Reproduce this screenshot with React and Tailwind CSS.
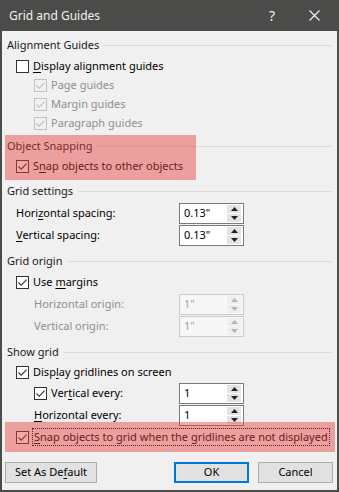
import React from 'react';

const font = { fontFamily: '"Noto Sans", "Liberation Sans", sans-serif' };

function Box({ checked, disabled }) {
    return (
        <span className={`flex h-[13px] w-[13px] shrink-0 items-center justify-center border ${disabled ? 'border-[#c2c2c2] bg-[#f0f0f0]' : 'border-[#333333] bg-white'}`}>
            {checked && (
                <svg width="11" height="11" viewBox="0 0 11 11">
                    <path d="M1.5 5.5 L4.2 8.2 L9.6 2.6" fill="none" stroke={disabled ? '#c2c2c2' : '#333333'} strokeWidth="1.1" />
                </svg>
            )}
        </span>
    );
}

function Heading({ children }) {
    return (
        <div className="flex h-[22px] items-center pl-[5px] pr-[5px] text-[11px] text-[#1a1a1a]">
            <span>{children}</span>
            <span className="ml-[5px] h-px flex-1 bg-[#dcdcdc]" />
        </div>
    );
}

function Check({ checked, disabled, indent, children, h = 'h-[19px]' }) {
    return (
        <div className={`flex ${h} items-center gap-[4px] text-[11px] ${indent ? 'pl-[32px]' : 'pl-[14px]'} ${disabled ? 'text-[#8f8f8f]' : 'text-black'}`}>
            <Box checked={checked} disabled={disabled} />
            <span>{children}</span>
        </div>
    );
}

function Arrow({ up, disabled }) {
    return (
        <span className={`flex h-[8px] w-[14px] items-center justify-center ${disabled ? 'bg-[#efefef]' : 'bg-[#e3e3e3]'}`}>
            <svg width="7" height="4" viewBox="0 0 7 4">
                <path d={up ? 'M0 4 L3.5 0 L7 4 Z' : 'M0 0 L3.5 4 L7 0 Z'} fill={disabled ? '#b5b5b5' : '#222222'} />
            </svg>
        </span>
    );
}

function Spin({ value, disabled }) {
    return (
        <div className={`flex h-[21px] w-[65px] items-center border pl-[4px] pr-[2px] text-[11px] ${disabled ? 'border-[#cccccc] bg-[#f7f7f7] text-[#a3a3a3]' : 'border-[#7a7a7a] bg-white text-black'}`}>
            <span>{value}</span>
            <span className="ml-auto flex flex-col gap-px">
                <Arrow up disabled={disabled} />
                <Arrow disabled={disabled} />
            </span>
        </div>
    );
}

function Field({ label, value, disabled, indent, checkbox, checked }) {
    return (
        <div className={`flex h-[22px] items-center pr-[93px] text-[11px] ${indent ? 'pl-[32px]' : 'pl-[14px]'} ${disabled ? 'text-[#8f8f8f]' : 'text-black'}`}>
            {checkbox && <span className="mr-[4px]"><Box checked={checked} /></span>}
            <span>{label}</span>
            <span className="ml-auto"><Spin value={value} disabled={disabled} /></span>
        </div>
    );
}

function Button({ children, primary, className = '' }) {
    return (
        <div className={`flex h-[21px] items-center justify-center bg-[#e1e1e1] text-[11px] text-black ${primary ? 'border-2 border-[#0078d7]' : 'border border-[#adadad]'} ${className}`}>
            {children}
        </div>
    );
}

export default function App() {
    return (
        <div className="flex h-[492px] w-[339px] flex-col overflow-hidden bg-[#4b4b49]" style={font}>
            {/* title bar */}
            <div className="flex h-[31px] shrink-0 items-center pl-[9px] text-[12px] text-[#f2f2f2]">
                <span>Grid and Guides</span>
                <span className="ml-auto mr-[34px] text-[14px]">?</span>
                <svg className="mr-[19px]" width="11" height="11" viewBox="0 0 11 11">
                    <path d="M0.5 0.5 L10.5 10.5 M10.5 0.5 L0.5 10.5" stroke="#f2f2f2" strokeWidth="1.2" />
                </svg>
            </div>

            <div className="mx-[2px] mb-[2px] flex flex-1 flex-col bg-[#f0f0f0] pt-[3px]">
                <Heading>Alignment Guides</Heading>
                <Check h="h-[20px]"><span className="underline underline-offset-2">D</span>isplay alignment guides</Check>
                <Check checked disabled indent>Page guides</Check>
                <Check checked disabled indent>Margin guides</Check>
                <Check checked disabled indent>Paragraph guides</Check>

                {/* highlighted: object snapping */}
                <div className="relative mt-[2px] pb-[4px]">
                    <Heading>Object Snapping</Heading>
                    <Check checked>S<span className="underline underline-offset-2">n</span>ap objects to other objects</Check>
                    <div className="pointer-events-none absolute left-[3px] top-0 h-[45px] w-[191px] bg-[rgba(230,60,60,0.45)]" />
                </div>

                <Heading>Grid settings</Heading>
                <Field label={<>Hori<span className="underline underline-offset-2">z</span>ontal spacing:</>} value={'0.13"'} />
                <Field label={<><span className="underline underline-offset-2">V</span>ertical spacing:</>} value={'0.13"'} />

                <div className="mt-[4px]"><Heading>Grid origin</Heading></div>
                <Check checked h="h-[20px]">Use <span className="underline underline-offset-2">m</span>argins</Check>
                <div className="mt-px" />
                <Field label="Horizontal origin:" value={'1"'} disabled indent />
                <Field label="Vertical origin:" value={'1"'} disabled indent />

                <div className="mt-[4px]"><Heading>Show grid</Heading></div>
                <Check checked>Disp<span className="underline underline-offset-2">l</span>ay gridlines on screen</Check>
                <Field label={<>Ver<span className="underline underline-offset-2">t</span>ical every:</>} value="1" indent checkbox checked />
                <Field label={<><span className="underline underline-offset-2">H</span>orizontal every:</>} value="1" indent />

                {/* highlighted: snap to grid */}
                <div className="relative flex h-[22px] items-center gap-[3px] pl-[14px] text-[11px] text-black">
                    <Box checked />
                    <span className="whitespace-nowrap border border-dotted border-black px-px leading-[16px]">
                        <span className="underline underline-offset-2">S</span>nap objects to grid when the gridlines are not displayed
                    </span>
                    <div className="pointer-events-none absolute left-[3px] right-[2px] top-[-4px] h-[30px] bg-[rgba(230,60,60,0.45)]" />
                </div>

                <div className="mt-[14px] flex pl-[3px] pr-[4px]">
                    <Button className="w-[92px]">Set As De<span className="underline underline-offset-2">f</span>ault</Button>
                    <Button primary className="ml-auto w-[75px]">OK</Button>
                    <Button className="ml-[9px] w-[75px]">Cancel</Button>
                </div>
            </div>
        </div>
    );
}
